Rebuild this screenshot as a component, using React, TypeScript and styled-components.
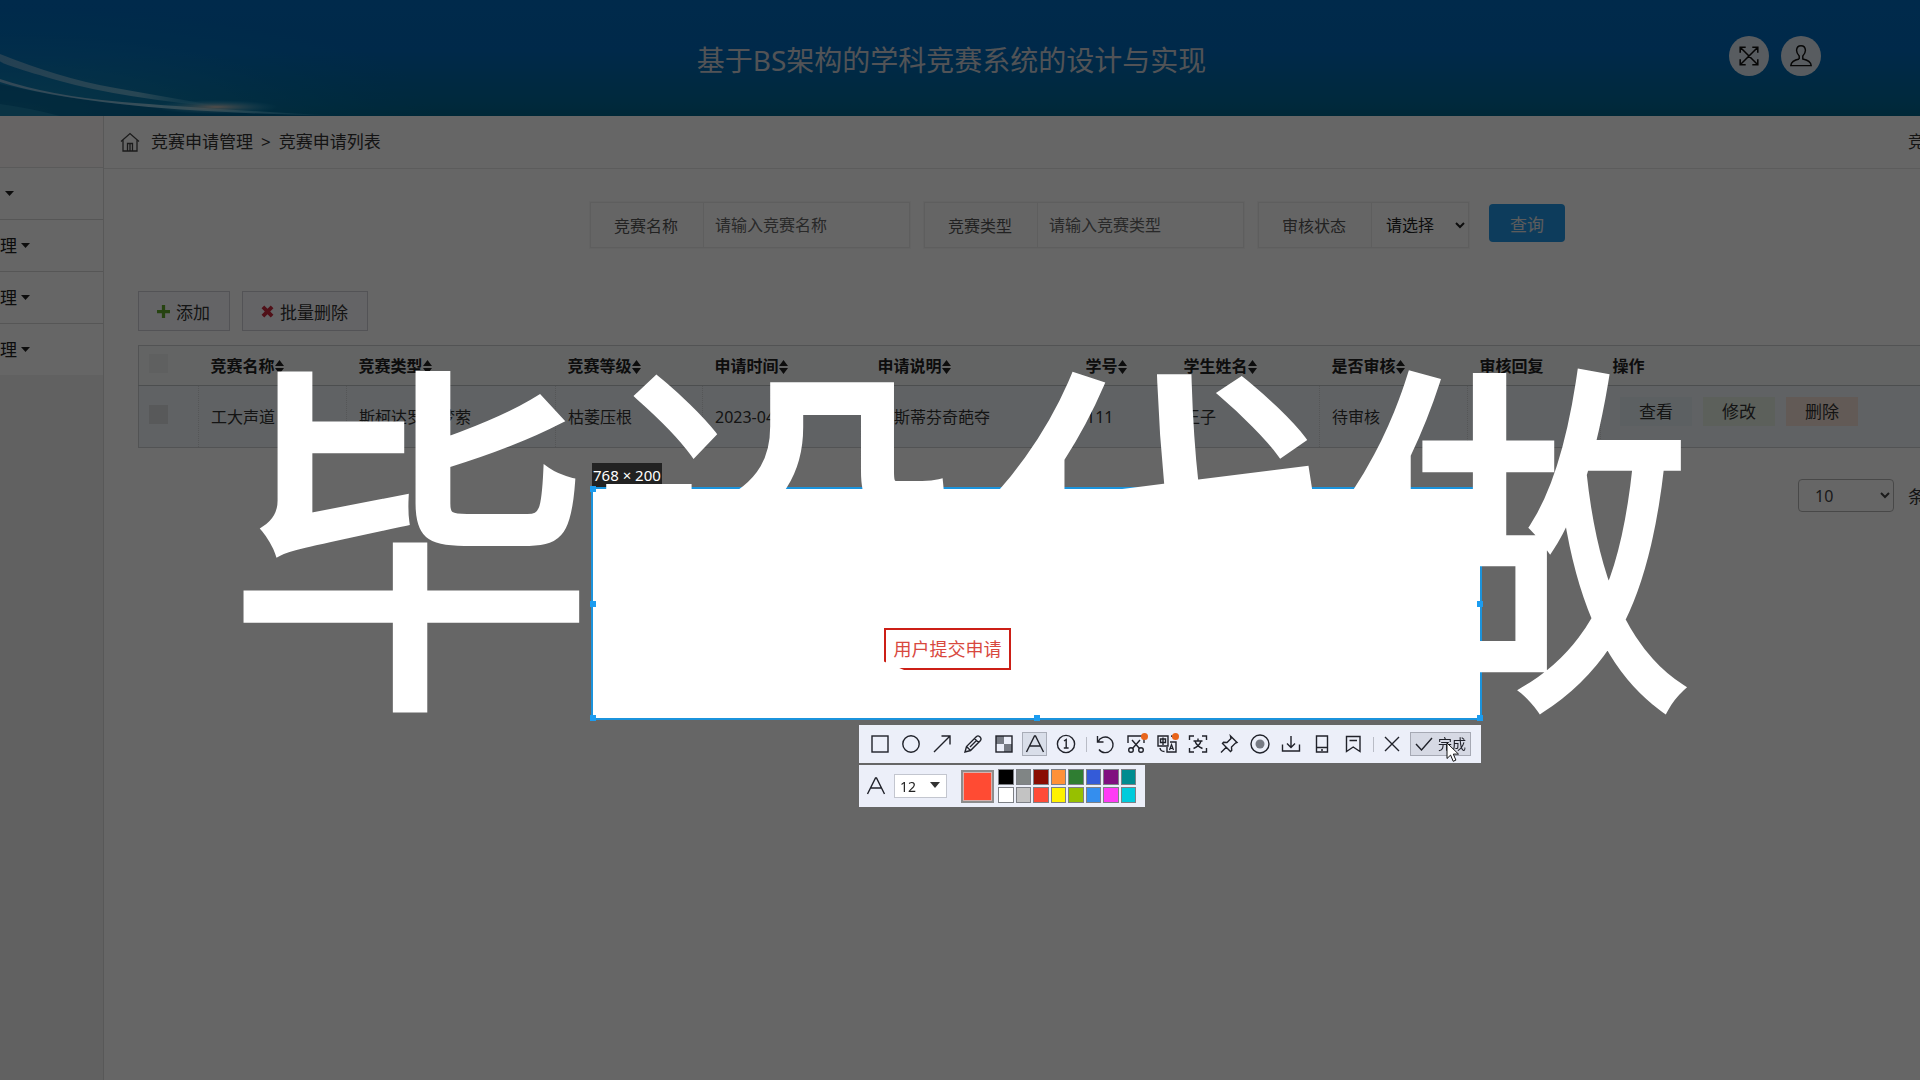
import React from "react";
import styled, { createGlobalStyle, css } from "styled-components";

const Global = createGlobalStyle`
  *, *::before, *::after { box-sizing: border-box; }
  html, body { margin: 0; background: #fff; overflow: hidden; }
  body, button, input, select {
    font-family: "Noto Sans", "Noto Sans CJK SC", sans-serif;
  }
  button { cursor: pointer; padding: 0; }
`;

/* ---------- admin page ---------- */

const Page = styled.div`
  min-height: 100vh;
  display: flex;
  flex-direction: column;
  background: #fff;
  color: #333;
`;

const Header = styled.header`
  position: relative;
  height: 116px;
  flex: none;
  display: grid;
  grid-template-columns: 1fr auto 1fr;
  align-items: center;
  padding: 0 99px 0 82px;
  background: linear-gradient(#0069bc 0%, #0068b8 45%, #006696 90%, #00648a 100%);
`;

const Wave = styled.svg`
  position: absolute;
  left: 0;
  top: 0;
  width: 480px;
  height: 116px;
`;

const Title = styled.h1`
  grid-column: 2;
  margin: 0;
  padding-top: 4px;
  font-size: 28px;
  line-height: 40px;
  font-weight: 400;
  color: #ccd0d6;
`;

const HeaderActions = styled.div`
  display: flex;
  gap: 12px;
  justify-content: flex-end;
  padding-bottom: 4px;
`;

const RoundButton = styled.button`
  width: 40px;
  height: 40px;
  border: 0;
  border-radius: 50%;
  background: #dde6ef;
  color: #111;
  display: grid;
  place-items: center;
`;

const Body = styled.div`
  flex: 1;
  display: flex;
`;

const Sidebar = styled.nav`
  width: 104px;
  flex: none;
  background: #f2f2f2;
  border-right: 1px solid #dcdcdc;
`;

const SideTop = styled.div`
  height: 52px;
  background: #fffafa;
  border-bottom: 1px solid #e2e2e2;
`;

const SideItem = styled.a`
  display: flex;
  align-items: center;
  gap: 4px;
  height: 52px;
  border-bottom: 1px solid #d8d8d8;
  background: #fff;
  color: #222;
  font-size: 17px;
  line-height: 24px;
  text-decoration: none;
  padding-left: ${(p: { $bare?: boolean }) => (p.$bare ? "5px" : "0")};

  &:last-child {
    border-bottom-color: #f2f2f2;
  }
`;

const Main = styled.main`
  flex: 1;
  min-width: 0;
`;

const Crumbs = styled.div`
  height: 53px;
  display: flex;
  align-items: center;
  padding-left: 16px;
  border-bottom: 1px solid #e6e6e6;
  font-size: 17px;
  line-height: 24px;
  color: #333;
`;

const CrumbPath = styled.div`
  flex: 1;
  display: flex;
  align-items: center;
  gap: 8px;

  svg {
    margin-right: 3px;
  }
`;

const EdgeText = styled.span`
  width: 12px;
  overflow: hidden;
  white-space: nowrap;
`;

const SearchForm = styled.form`
  display: flex;
  align-items: center;
  gap: 14px;
  padding: 33px 0 0 486px;
`;

const Field = styled.div`
  display: flex;
  width: ${(p: { $width: number }) => p.$width}px;
  height: 46px;
  border: 1px solid #ececec;
  font-size: 16px;
  outline: 1px solid #f8f8f8;
`;

const FieldLabel = styled.label`
  width: 113px;
  flex: none;
  display: grid;
  place-items: center;
  padding-right: 2px;
  border-right: 1px solid #ececec;
  background: #fdfdfd;
  color: #555;
`;

const fieldControl = css`
  flex: 1;
  min-width: 0;
  border: 0;
  background: #fff;
  font-size: 16px;
`;

const TextInput = styled.input`
  ${fieldControl}
  padding: 0 11px;
  &::placeholder {
    color: #666;
    opacity: 1;
  }
`;

const FieldSelect = styled.select`
  ${fieldControl}
  padding-left: 10px;
  color: #222;
`;

const QueryButton = styled.button`
  width: 76px;
  height: 38px;
  margin: 0 0 4px 6px;
  border: 0;
  border-radius: 4px;
  background: #2296e6;
  color: #e6e6e6;
  font-size: 17px;
`;

const Tools = styled.div`
  display: flex;
  gap: 12px;
  padding: 43px 0 0 34px;
`;

const ToolButton = styled.button`
  height: 40px;
  padding: 0 19px 0 18px;
  display: flex;
  align-items: center;
  gap: 6px;
  border: 1px solid #cfd0d8;
  background: #fbfbff;
  color: #333;
  font-size: 17px;
`;

const TableWrap = styled.div`
  padding: 14px 0 0 34px;
`;

const Table = styled.table`
  width: 100%;
  table-layout: fixed;
  border-collapse: collapse;
  border: 1px solid #ccd0d2;
  border-right: 0;
  font-size: 16px;
  line-height: 24px;
`;

const Th = styled.th`
  height: 40px;
  padding: 0 12px;
  text-align: left;
  font-weight: 700;
  color: #222;
  background: #f8fafb;
  white-space: nowrap;
  border-bottom: 1px solid #bfc4c6;
`;

const Sort = styled.svg`
  width: 9px;
  height: 14px;
  vertical-align: -2px;
`;

const Td = styled.td`
  height: 62px;
  padding: 0 12px;
  color: #333;
  background: #f1f6f9;
  white-space: nowrap;
  border-right: 1px dotted #d4d8da;
  &:last-child {
    border-right: 0;
  }
`;

const Check = styled.input`
  appearance: none;
  display: block;
  width: 19px;
  height: 19px;
  margin: 0 0 4px -2px;
  background: ${(p: { $faint?: boolean }) => (p.$faint ? "#eeeff0" : "#dcdfe0")};
`;

const RowActions = styled.div`
  display: flex;
  gap: 11px;
  padding: 0 0 10px 7px;
`;

const tones = { view: "#e6f1f6", edit: "#e6f0e4", remove: "#f5e2d6" };

const RowButton = styled.button`
  width: 72px;
  height: 29px;
  border: 0;
  background: ${(p: { $tone: keyof typeof tones }) => tones[p.$tone]};
  color: #333;
  font-size: 17px;
  line-height: 29px;
`;

const Pager = styled.div`
  display: flex;
  align-items: center;
  justify-content: flex-end;
  gap: 14px;
  padding-top: 31px;
  font-size: 17px;
  color: #333;
`;

const PageSize = styled.select`
  width: 96px;
  height: 33px;
  padding-left: 12px;
  border: 1px solid #b4b4b4;
  border-radius: 4px;
  background: #fff;
  color: #444;
  font-size: 16px;
`;

/* ---------- capture layer ---------- */

const Mask = styled.div`
  position: fixed;
  inset: 0;
  background: rgba(0, 0, 0, 0.6);
`;

const Selection = styled.section`
  position: absolute;
  left: 591px;
  top: 487px;
  width: 891px;
  height: 233px;
  border: 2px solid #1b93dc;
  background: #fff;
`;

const SizeTag = styled.div`
  position: absolute;
  left: -1px;
  bottom: calc(100% + 2px);
  padding: 0 1px;
  background: #222;
  color: #fff;
  font-size: 15px;
  line-height: 24px;
  white-space: nowrap;
`;

const Handle = styled.i`
  position: absolute;
  left: ${(p: { $x: number; $y: number }) => p.$x}%;
  top: ${(p) => p.$y}%;
  width: 6px;
  height: 6px;
  margin: -3px;
  background: #1b9cf0;
`;

const Note = styled.div`
  position: absolute;
  left: 291px;
  top: 139px;
  width: 127px;
  height: 42px;
  border: 2px solid #cc1f16;
  display: grid;
  place-items: center;
  color: #d8483e;
  font-size: 18px;
  line-height: 24px;
  white-space: nowrap;
`;

const Bars = styled.div`
  position: absolute;
  right: -1px;
  top: calc(100% + 7px);
  width: 622px;
  display: flex;
  flex-direction: column;
  align-items: flex-start;
  gap: 2px;
`;

const ToolBar = styled.div`
  align-self: stretch;
  height: 38px;
  display: flex;
  align-items: center;
  padding: 0 10px 0 8px;
  background: #eceff9;
  color: #20222a;
`;

const IconButton = styled.button`
  position: relative;
  width: 25px;
  height: 24px;
  margin-right: 6px;
  flex: none;
  display: grid;
  place-items: center;
  border: 1px solid ${(p: { $on?: boolean }) => (p.$on ? "#a9adb8" : "transparent")};
  background: ${(p) => (p.$on ? "#d9dee9" : "transparent")};
  color: inherit;
`;

const Dot = styled.b`
  position: absolute;
  right: -1px;
  top: 0;
  width: 7px;
  height: 7px;
  border-radius: 50%;
  background: #e8641b;
`;

const Divider = styled.span`
  width: 1px;
  height: 15px;
  margin: 0 5px 0 2px;
  background: #b9bcc6;
`;

const DoneButton = styled.button`
  flex: 1;
  height: 24px;
  display: flex;
  align-items: center;
  justify-content: center;
  gap: 5px;
  border: 1px solid #a6a9b4;
  background: #d6d9e4;
  color: #20222a;
  font-size: 14px;
  line-height: 20px;
`;

const StyleBar = styled.div`
  height: 42px;
  display: flex;
  align-items: center;
  padding: 0 9px 0 7px;
  background: #eceff9;
  color: #20222a;
`;

const SizePicker = styled.div`
  position: relative;
  width: 53px;
  height: 24px;
  margin: 0 14px 0 8px;
  svg {
    position: absolute;
    right: 7px;
    top: 8px;
    pointer-events: none;
  }
`;

const SizeSelect = styled.select`
  appearance: none;
  width: 100%;
  height: 100%;
  padding: 0 0 0 5px;
  border: 1px solid #c3c6cf;
  background: #fff;
  color: #222;
  font-size: 14px;
`;

const Current = styled.button`
  width: 33px;
  height: 33px;
  margin-right: 4px;
  border: 2px solid #8d8d8d;
  outline: 1px solid #d9b0ac;
  outline-offset: -3px;
  background: #ff4b33;
`;

const Palette = styled.div`
  width: 138px;
  display: grid;
  grid-template-columns: repeat(8, 1fr);
  gap: 2px;
`;

const Swatch = styled.button`
  height: 16px;
  border: 1px solid #7d8086;
  background: ${(p: { $color: string }) => p.$color};
`;

const Pointer = styled.svg`
  position: absolute;
  left: 1446px;
  top: 742px;
  width: 14px;
  height: 21px;
`;

const Watermark = styled.div`
  position: fixed;
  inset: 0;
  display: grid;
  place-items: center;
  padding-bottom: 40px;
  pointer-events: none;
  color: #fff;
  font-family: "Noto Sans CJK SC", sans-serif;
  font-size: 366px;
  line-height: 1;
  font-weight: 400;
  -webkit-text-stroke: 7px #fff;
  stroke-linejoin: round;
  white-space: nowrap;
`;

/* ---------- icons ---------- */

const Icon = ({ children, size = 20 }: { children: React.ReactNode; size?: number }) => (
  <svg
    width={size}
    height={size}
    viewBox="0 0 20 20"
    fill="none"
    stroke="currentColor"
    strokeWidth="1.4"
    aria-hidden="true"
  >
    {children}
  </svg>
);

const Caret = () => (
  <svg width="9" height="6" viewBox="0 0 9 6" aria-hidden="true">
    <path d="M0 0h9L4.500 5z" fill="#222" />
  </svg>
);

const letterA = <path d="M1.500 18L9.500 2h1l8 16M5 12h10" />;

const drawTools = [
  { name: "矩形", art: <rect x="2" y="2" width="16" height="16" /> },
  { name: "椭圆", art: <circle cx="10" cy="10" r="8.200" /> },
  { name: "箭头", art: <path d="M2 18L18 2M9.500 2H18v8.500" /> },
  {
    name: "画笔",
    art: <path d="M2 18l1.500-5.500L13.500 2.500q1.500-1.200 3 0l1 1q1.200 1.500 0 3L7.500 16.500zM11.500 4.500l4 4M3.500 12.500l4 4M7 13l6-6" />,
  },
  {
    name: "马赛克",
    art: (
      <>
        <path d="M2 2h8v8H2zM10 10h8v8h-8z" fill="#777b84" stroke="none" />
        <rect x="2" y="2" width="16" height="16" />
      </>
    ),
  },
  { name: "文字", art: letterA, on: true },
  {
    name: "序号",
    art: (
      <>
        <circle cx="10" cy="10" r="8.600" />
        <path d="M8 7l2.200-1.500V14M7.800 14h4.800" />
      </>
    ),
  },
];

const actionTools = [
  { name: "撤销", art: <path d="M2.500 2v6h6M3 8a7.800 7.800 0 1 1 1 7.500" /> },
  {
    name: "截图",
    dot: true,
    art: (
      <>
        <path d="M2 9V2h16v7M6 6l7.500 8.500M14 6l-7.500 8.500" />
        <circle cx="5" cy="16" r="2.300" />
        <circle cx="15" cy="16" r="2.300" />
      </>
    ),
  },
  {
    name: "翻译",
    dot: true,
    art: (
      <>
        <path d="M1 2h10v10H1zM3.500 5h5v3.500h-5zM6 3.500V11M13 8h6v10h-9v-5M14 2q2.500 0 3 3M3 14q.5 3.500 4.500 3.500" />
        <path d="M12.500 16l2-5.500 2 5.500M13.200 14.300h2.800" strokeWidth="1.200" />
      </>
    ),
  },
  {
    name: "识别文字",
    art: (
      <path d="M1.500 6V2H6M14 2h4.500v4M1.500 14v4H6M14 18h4.500v-4M5.500 7h9M10 4.500V7M7 7q1.500 5 7.500 7.500M13 7q-1.500 5-7.500 7.500" />
    ),
  },
  { name: "钉住", art: <path d="M11.500 2l6.500 6.500-1.500.5-4 4 .2 3.500-1.200 1L3.500 9.500l1-1.200 3.500.2 4-4zM7.500 13L2 18.500" /> },
  {
    name: "录制",
    art: (
      <>
        <circle cx="10" cy="10" r="9" />
        <circle cx="10" cy="10" r="4.500" fill="#777b84" stroke="none" />
      </>
    ),
  },
  { name: "保存", art: <path d="M10 2v11M6 9.500l4 4 4-4M1.500 10.500V17h17v-6.500" /> },
  { name: "发送到手机", art: <path d="M4.500 2h11v16h-11zM4.500 13.500h11M9 16h2" /> },
  { name: "收藏", art: <path d="M3.500 2.500h13.500v15l-6.800-4.500-6.700 4.500zM6.500 6.500h7.500" /> },
];

const swatches = [
  "#000000", "#808585", "#8a0c02", "#ff9138", "#2f7d32", "#345bd8", "#80107f", "#008c90",
  "#ffffff", "#c3c3c3", "#ff4b38", "#fff200", "#97c000", "#348eee", "#ff3bf5", "#00cbdc",
];

const handles = [
  [0, 0], [50, 0], [100, 0],
  [0, 50], [100, 50],
  [0, 100], [50, 100], [100, 100],
];

const columns = [
  { title: "竞赛名称", width: 148, value: "工大声道" },
  { title: "竞赛类型", width: 209, value: "斯柯达罗密梦萦" },
  { title: "竞赛等级", width: 147, value: "枯萎压根" },
  { title: "申请时间", width: 163, value: "2023-04-11" },
  { title: "申请说明", width: 208, value: "阿斯蒂芬奇葩夺" },
  { title: "学号", width: 98, value: "111" },
  { title: "学生姓名", width: 148, value: "王子" },
  { title: "是否审核", width: 148, value: "待审核" },
  { title: "审核回复", width: 133, value: "", fixed: true },
];

export default function App() {
  return (
    <>
      <Global />
      <Page>
        <Header>
          <Wave viewBox="0 0 480 116" aria-hidden="true">
            <defs>
              <radialGradient id="pool" cx="0" cy="1" r="1">
                <stop offset="0" stopColor="#2aa4cc" stopOpacity="0.6" />
                <stop offset="1" stopColor="#0078b8" stopOpacity="0" />
              </radialGradient>
              <radialGradient id="spark">
                <stop offset="0" stopColor="#e6c8b8" stopOpacity="0.9" />
                <stop offset="1" stopColor="#3cb4e0" stopOpacity="0" />
              </radialGradient>
              <linearGradient id="streak">
                <stop offset="0" stopColor="#7fb4d8" />
                <stop offset="0.6" stopColor="#8cc8e0" />
                <stop offset="1" stopColor="#3cb4e0" stopOpacity="0" />
              </linearGradient>
            </defs>
            <rect width="440" height="116" fill="url(#pool)" />
            <path d="M0 84Q60 98 120 104T330 116H0z" fill="#005a8c" opacity="0.6" />
            <path d="M0 54Q60 78 110 87T230 108Q120 98 60 81T0 61z" fill="url(#streak)" opacity="0.7" />
            <path d="M0 79Q50 96 122 102T340 116Q200 113 120 104T0 82z" fill="url(#streak)" />
            <path d="M0 104Q30 108 60 116H0z" fill="#2a94bc" opacity="0.5" />
            <ellipse cx="216" cy="107" rx="62" ry="7" fill="url(#spark)" />
          </Wave>
          <Title>基于BS架构的学科竞赛系统的设计与实现</Title>
          <HeaderActions>
            <RoundButton type="button" aria-label="全屏">
              <Icon size={22}>
                <path d="M2 2l16 16M18 2L2 18M2 7V2h5M13 2h5v5M2 13v5h5M18 13v5h-5" />
              </Icon>
            </RoundButton>
            <RoundButton type="button" aria-label="用户">
              <Icon size={24}>
                <path d="M8.500 12.500V10C7 8.500 6.300 7 6.300 5.300Q6.500 1.500 10 1.500t3.700 3.800c0 1.700-.7 3.200-2.200 4.700v2.500q6.500 1.200 7 5.500h-17q.5-4.300 7-5.500" strokeWidth="1.200" />
              </Icon>
            </RoundButton>
          </HeaderActions>
        </Header>

        <Body>
          <Sidebar>
            <SideTop />
            <SideItem href="#" $bare aria-label="展开菜单"><Caret /></SideItem>
            <SideItem href="#">理<Caret /></SideItem>
            <SideItem href="#">理<Caret /></SideItem>
            <SideItem href="#">理<Caret /></SideItem>
          </Sidebar>

          <Main>
            <Crumbs>
              <CrumbPath>
                <svg width="20" height="20" viewBox="0 0 20 20" fill="none" stroke="#444" strokeWidth="1.300" aria-hidden="true">
                  <path d="M1 9.500l9-8 9 8M3 8v11h14V8M7.500 19v-7.500h5V19M10 12v7" />
                </svg>
                <span>竞赛申请管理</span>
                <span>&gt;</span>
                <span>竞赛申请列表</span>
              </CrumbPath>
              <EdgeText>竞</EdgeText>
            </Crumbs>

            <SearchForm onSubmit={(e) => e.preventDefault()}>
              <Field $width={320}>
                <FieldLabel htmlFor="name">竞赛名称</FieldLabel>
                <TextInput id="name" placeholder="请输入竞赛名称" />
              </Field>
              <Field $width={320}>
                <FieldLabel htmlFor="kind">竞赛类型</FieldLabel>
                <TextInput id="kind" placeholder="请输入竞赛类型" />
              </Field>
              <Field $width={211}>
                <FieldLabel htmlFor="state">审核状态</FieldLabel>
                <FieldSelect id="state">
                  <option>请选择</option>
                </FieldSelect>
              </Field>
              <QueryButton>查询</QueryButton>
            </SearchForm>

            <Tools>
              <ToolButton type="button">
                <svg width="13" height="13" viewBox="0 0 12 12" aria-hidden="true">
                  <path d="M4.500 0h3v4.500H12v3H7.500V12h-3V7.500H0v-3h4.500z" fill="#5fa82c" />
                </svg>
                添加
              </ToolButton>
              <ToolButton type="button">
                <svg width="13" height="13" viewBox="0 0 12 12" aria-hidden="true">
                  <path d="M3 .5L6 3.500l3-3L11.500 3l-3 3 3 3L9 11.500l-3-3-3 3L.5 9l3-3-3-3z" fill="#c8283c" />
                </svg>
                批量删除
              </ToolButton>
            </Tools>

            <TableWrap>
              <Table>
                <colgroup>
                  <col width="60" />
                  {columns.map((c) => (
                    <col key={c.title} width={c.width} />
                  ))}
                  <col />
                </colgroup>
                <thead>
                  <tr>
                    <Th><Check type="checkbox" $faint aria-label="全选" /></Th>
                    {columns.map((c) => (
                      <Th key={c.title}>
                        {c.title}
                        {!c.fixed && (
                          <Sort viewBox="0 0 9 14" aria-hidden="true">
                            <path d="M4.500 0L9 6H0zM4.500 14L0 8h9z" fill="#222" />
                          </Sort>
                        )}
                      </Th>
                    ))}
                    <Th>操作</Th>
                  </tr>
                </thead>
                <tbody>
                  <tr>
                    <Td><Check type="checkbox" aria-label="选择此行" /></Td>
                    {columns.map((c) => (
                      <Td key={c.title}>{c.value}</Td>
                    ))}
                    <Td>
                      <RowActions>
                        <RowButton type="button" $tone="view">查看</RowButton>
                        <RowButton type="button" $tone="edit">修改</RowButton>
                        <RowButton type="button" $tone="remove">删除</RowButton>
                      </RowActions>
                    </Td>
                  </tr>
                </tbody>
              </Table>
            </TableWrap>

            <Pager>
              <PageSize aria-label="每页条数">
                <option>10</option>
              </PageSize>
              <EdgeText>条</EdgeText>
            </Pager>
          </Main>
        </Body>
      </Page>

      <Mask>
        <Selection>
          <SizeTag>768 × 200</SizeTag>
          {handles.map(([x, y]) => (
            <Handle key={`${x}-${y}`} $x={x} $y={y} />
          ))}
          <Note>用户提交申请</Note>

          <Bars>
            <ToolBar>
              {drawTools.map((t) => (
                <IconButton key={t.name} type="button" aria-label={t.name} $on={t.on}>
                  <Icon>{t.art}</Icon>
                </IconButton>
              ))}
              <Divider />
              {actionTools.map((t) => (
                <IconButton key={t.name} type="button" aria-label={t.name}>
                  <Icon>{t.art}</Icon>
                  {t.dot && <Dot />}
                </IconButton>
              ))}
              <Divider />
              <IconButton type="button" aria-label="取消">
                <Icon><path d="M3 3l14 14M17 3L3 17" /></Icon>
              </IconButton>
              <DoneButton type="button">
                <svg width="18" height="14" viewBox="0 0 18 14" fill="none" stroke="currentColor" strokeWidth="1.400" aria-hidden="true">
                  <path d="M1 7l5.500 6L17 1" />
                </svg>
                完成
              </DoneButton>
            </ToolBar>

            <StyleBar>
              <Icon>{letterA}</Icon>
              <SizePicker>
                <SizeSelect aria-label="字号">
                  <option>12</option>
                </SizeSelect>
                <svg width="10" height="7" viewBox="0 0 10 7" aria-hidden="true">
                  <path d="M0 0h10L5 6z" fill="#333" />
                </svg>
              </SizePicker>
              <Current type="button" aria-label="当前颜色" />
              <Palette>
                {swatches.map((c) => (
                  <Swatch key={c} type="button" $color={c} aria-label={c} />
                ))}
              </Palette>
            </StyleBar>
          </Bars>
        </Selection>

        <Pointer viewBox="0 0 14 21" aria-hidden="true">
          <path d="M1 1v15.500l3.600-3.400 2.600 6.200 2.700-1.200-2.600-6H12.500z" fill="#fff" stroke="#111" />
        </Pointer>
      </Mask>

      <Watermark>毕设代做</Watermark>
    </>
  );
}
